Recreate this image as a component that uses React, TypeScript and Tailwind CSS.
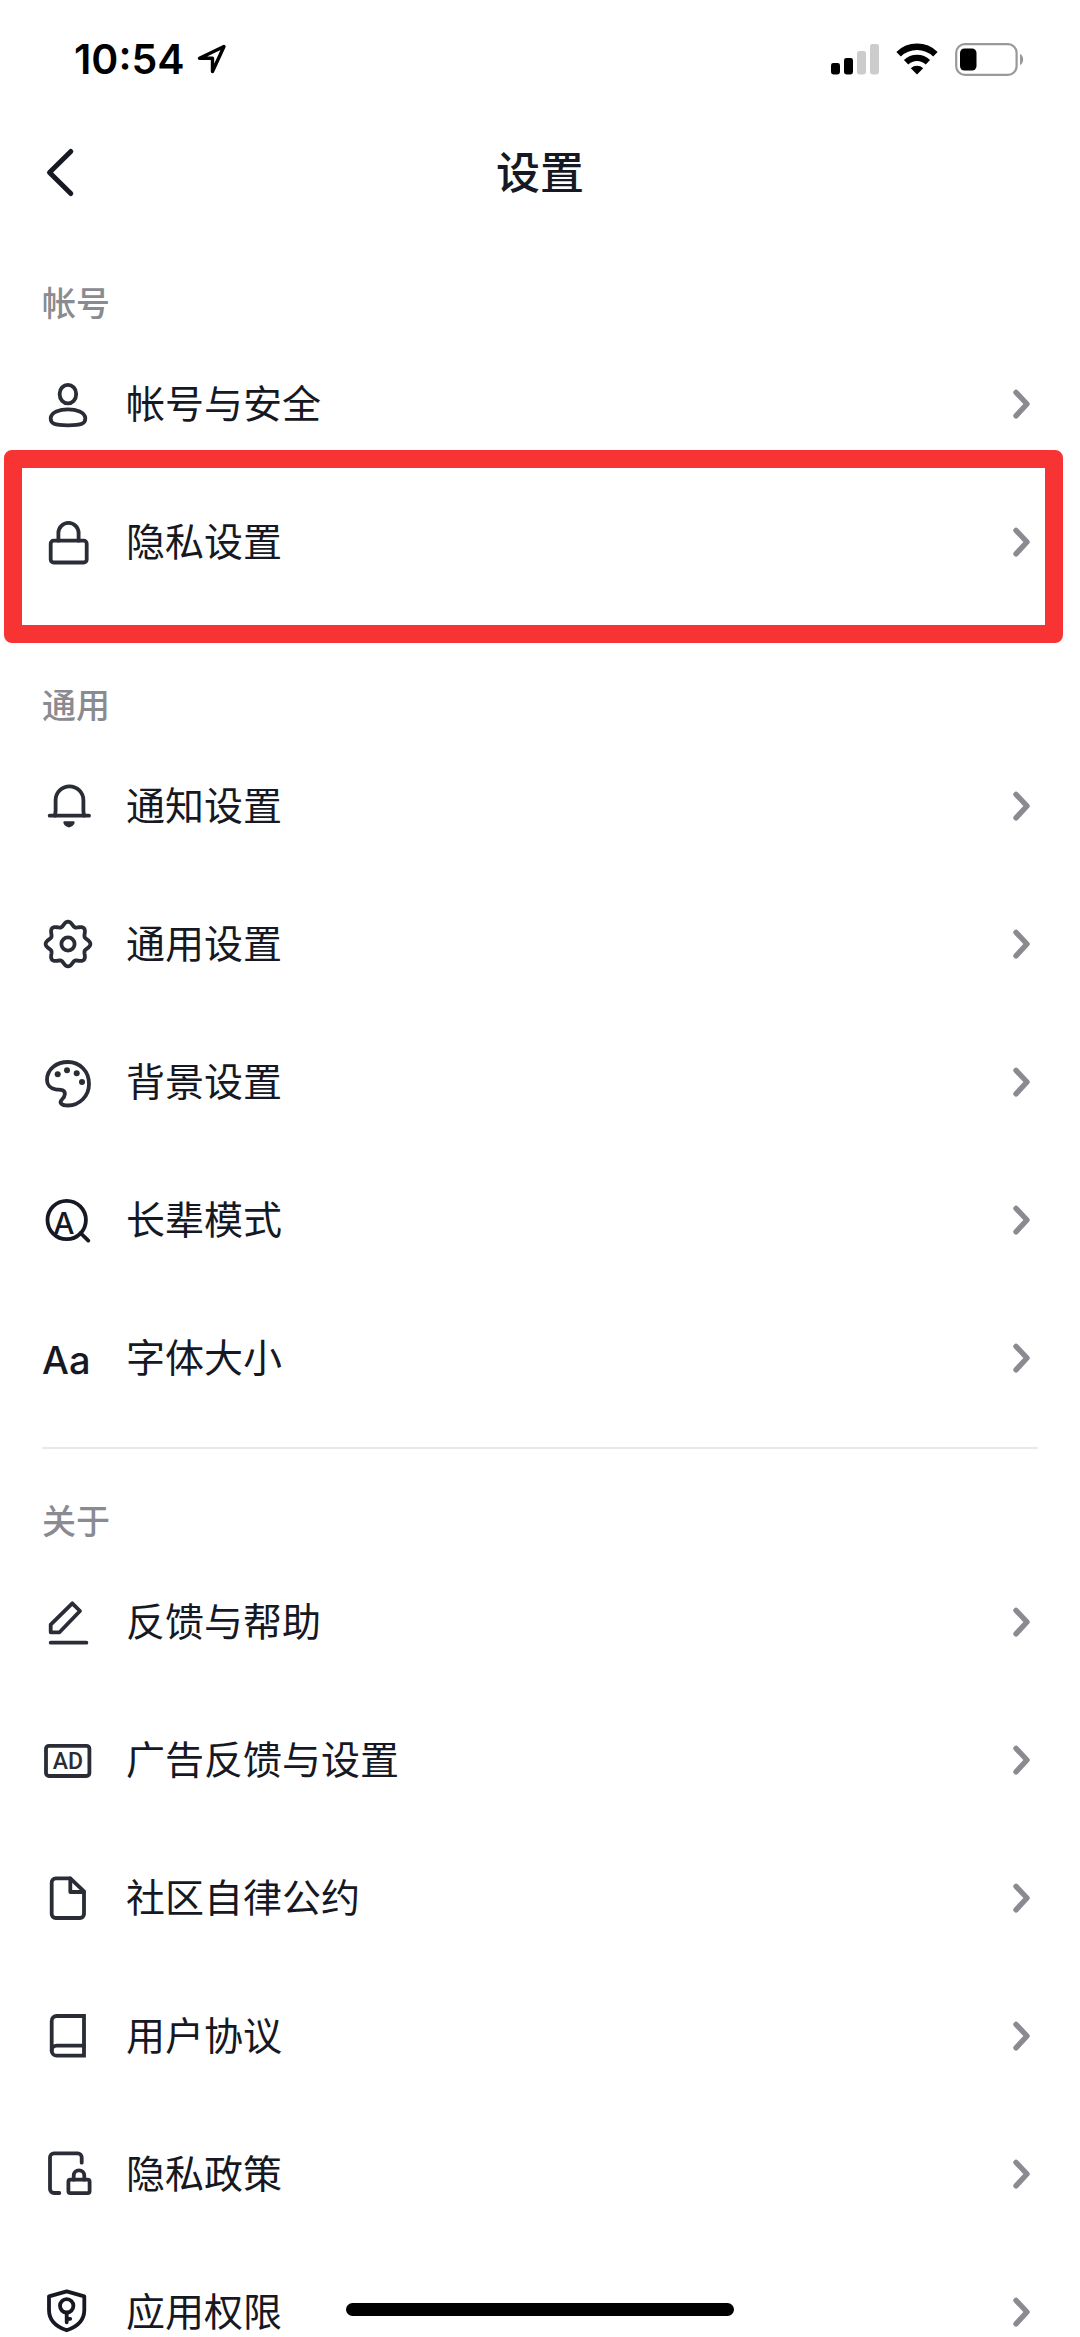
import React from 'react';

type SettingItem = {
    id: string;
    label: string;
    icon: React.ReactNode;
    dark?: boolean;
    highlighted?: boolean;
};

type SettingSection = {
    title: string;
    items: SettingItem[];
    spacing: string;
};

// Outline of the eight-lobed gear
const GEAR_POINTS = Array.from({ length: 120 }, (_, i) => {
    const angle = (i / 120) * Math.PI * 2;
    const radius = 20.2 + 2.2 * Math.cos(angle * 8);
    return `${(26 + radius * Math.cos(angle)).toFixed(2)},${(26 + radius * Math.sin(angle)).toFixed(2)}`;
}).join(' ');

const SECTIONS: SettingSection[] = [
    {
        title: '帐号',
        spacing: '',
        items: [
            {
                id: 'account',
                label: '帐号与安全',
                icon: (
                    <>
                        <rect x="17.7" y="6.8" width="16.4" height="18.6" rx="8.2" ry="8.6" />
                        <path d="M26 31.4C34 31.4 43.3 34 43.3 40.5C43.3 45.5 40 47.3 26 47.3C12 47.3 8.7 45.5 8.7 40.5C8.7 34 18 31.4 26 31.4Z" />
                    </>
                ),
            },
            {
                id: 'privacy',
                label: '隐私设置',
                highlighted: true,
                icon: (
                    <>
                        <rect x="8.7" y="24.7" width="36" height="21.8" rx="3" />
                        <path d="M16.4 24.7V17A10.1 10.1 0 0 1 36.6 17V24.7" />
                    </>
                ),
            },
        ],
    },
    {
        title: '通用',
        spacing: 'mt-[62px]',
        items: [
            {
                id: 'notification',
                label: '通知设置',
                icon: (
                    <>
                        <path d="M7.7 35.7H47" />
                        <path d="M13 35.7L13.6 31V20.2A13.9 13.9 0 0 1 41.4 20.2V31L42 35.7" />
                        <path d="M22.5 41.3H31.5C33 41.3 33 43 31.8 44.6C29 48.3 25 48.3 22.2 44.6C21 43 21 41.3 22.5 41.3Z" fill="currentColor" stroke="none" />
                    </>
                ),
            },
            {
                id: 'general',
                label: '通用设置',
                icon: (
                    <>
                        <polygon points={GEAR_POINTS} />
                        <circle cx="26" cy="26" r="6.6" />
                    </>
                ),
            },
            {
                id: 'background',
                label: '背景设置',
                icon: (
                    <>
                        <path d="M26 6C38 6 47 15.5 47 28C47 40 37.5 49.5 26 49.5C19 49.5 17 46.5 20 43.5C23.5 40 24 36 20.5 34.3C18 33.3 17 33.8 13.5 33.3C8.5 32.5 5 29 5 24C5 12.5 15 6 26 6Z" />
                        <g fill="currentColor" stroke="none">
                            <circle cx="15.7" cy="18.3" r="3" />
                            <circle cx="25" cy="14.3" r="3" />
                            <circle cx="34.7" cy="17.3" r="3" />
                            <circle cx="40" cy="26" r="3" />
                        </g>
                    </>
                ),
            },
            {
                id: 'elder',
                label: '长辈模式',
                dark: true,
                icon: (
                    <>
                        <circle cx="24.7" cy="26" r="19.2" />
                        <path d="M38.5 39L46.3 46.6" />
                        <text x="22" y="40" textAnchor="middle" fontSize="30" className="font-medium" fill="currentColor" stroke="none">A</text>
                    </>
                ),
            },
            {
                id: 'font-size',
                label: '字体大小',
                dark: true,
                icon: <text x="0" y="42" fontSize="38" className="font-medium" fill="currentColor" stroke="none">Aa</text>,
            },
        ],
    },
    {
        title: '关于',
        spacing: 'mt-10',
        items: [
            {
                id: 'feedback',
                label: '反馈与帮助',
                icon: (
                    <>
                        <path d="M30.3 7.3L38 15L17.5 36.3H8.7V28.6Z" />
                        <path d="M8.7 46.7H44.4" />
                    </>
                ),
            },
            {
                id: 'ads',
                label: '广告反馈与设置',
                icon: (
                    <>
                        <rect x="4" y="11.8" width="43.4" height="30.2" rx="3" />
                        <text x="26" y="35" textAnchor="middle" fontSize="23" className="font-['Roboto'] font-medium" fill="currentColor" stroke="none">AD</text>
                    </>
                ),
            },
            {
                id: 'community',
                label: '社区自律公约',
                icon: (
                    <>
                        <path d="M28.3 6.4H13.7A4 4 0 0 0 9.7 10.4V42A4 4 0 0 0 13.7 46H38A4 4 0 0 0 42 42V19.4Z" />
                        <path d="M28.3 6.4V20H42" />
                    </>
                ),
            },
            {
                id: 'agreement',
                label: '用户协议',
                icon: (
                    <>
                        <path d="M42 6H14.7A5 5 0 0 0 9.7 11V40.7A5 5 0 0 0 14.7 45.7H42Z" strokeLinejoin="miter" />
                        <path d="M9.7 40.7A5 5 0 0 1 14.7 35.7H42" />
                    </>
                ),
            },
            {
                id: 'policy',
                label: '隐私政策',
                icon: (
                    <>
                        <path d="M39.7 14.7V9.3A4 4 0 0 0 35.7 5.3H12A4 4 0 0 0 8 9.3V41A4 4 0 0 0 12 45H17.3" />
                        <rect x="26.4" y="31.7" width="21.2" height="13.4" rx="2" />
                        <path d="M31.7 31.7V27.7A5.3 5.3 0 0 1 42.3 27.7V31.7" />
                    </>
                ),
            },
            {
                id: 'permission',
                label: '应用权限',
                dark: true,
                icon: (
                    <>
                        <path d="M24.7 5.3L42.3 10.3V24C42.3 33.5 36 40.5 24.7 44.3C13.3 40.5 7 33.5 7 24V10.3Z" />
                        <circle cx="24.7" cy="19.8" r="6.7" />
                        <path d="M24.7 27V36.3M24.7 32.8H28.2" />
                    </>
                ),
            },
        ],
    },
];

function StatusBar() {
    return (
        <div className="h-[118px] flex-shrink-0 flex items-center justify-between pl-[74px] pr-14 text-black">
            <div className="flex items-center gap-3">
                <span className="text-[41px] leading-none font-semibold">10:54</span>
                <svg className="w-[30px] h-[30px]" viewBox="0 0 30 30" fill="none" stroke="currentColor" strokeWidth="3.4" strokeLinejoin="round">
                    <path d="M27 2.5L2.5 14.3H15.5V27.5Z" />
                </svg>
            </div>

            <div className="flex items-center">
                {/* Signal */}
                <svg className="w-12 h-8" viewBox="0 0 48 32" fill="currentColor">
                    <rect x="0" y="20" width="9" height="11.5" rx="2.4" />
                    <rect x="13" y="15" width="9" height="16.5" rx="2.4" />
                    <rect x="26" y="8" width="9" height="23.5" rx="2.4" fill="#cccccc" />
                    <rect x="39" y="1" width="9" height="30.5" rx="2.4" fill="#cccccc" />
                </svg>
                {/* Wifi */}
                <svg className="w-[42px] h-8 ml-[17px]" viewBox="0 0 42 32" fill="none" stroke="currentColor">
                    <path d="M2.6 11.2A26.5 26.5 0 0 1 39.4 11.2" strokeWidth="6.4" />
                    <path d="M10.1 19.3A15.6 15.6 0 0 1 31.9 19.3" strokeWidth="6.2" />
                    <path d="M21 31.5L14.8 25.2A9 9 0 0 1 27.2 25.2Z" fill="currentColor" stroke="none" />
                </svg>
                {/* Battery */}
                <svg className="w-[69px] h-[33px] ml-[17px]" viewBox="0 0 69 33" fill="none">
                    <rect x="1.2" y="1.2" width="60.4" height="30.6" rx="8.5" stroke="#999999" strokeWidth="2.2" />
                    <rect x="5" y="5.5" width="16.5" height="22" rx="4.5" fill="#000000" />
                    <path d="M65 11C69.2 12.5 69.2 20.5 65 22Z" fill="#999999" />
                </svg>
            </div>
        </div>
    );
}

function SettingRow({ item }: { item: SettingItem }) {
    return (
        <li className="relative">
            <a href={`#${item.id}`} className="h-[138px] px-[42px] flex items-center gap-8">
                <svg
                    className={`w-[52px] h-[52px] flex-shrink-0 ${item.dark ? 'text-[#161823]' : 'text-[#2b2d36]'}`}
                    viewBox="0 0 52 52"
                    fill="none"
                    stroke="currentColor"
                    strokeWidth="3.8"
                    strokeLinecap="round"
                    strokeLinejoin="round"
                    aria-hidden="true"
                >
                    {item.icon}
                </svg>
                <span className="flex-1 min-w-0 text-[39px] leading-[56px] text-[#161823]">{item.label}</span>
                <svg className="w-[34px] h-[34px] flex-shrink-0 text-[#8a8b91]" viewBox="0 0 34 34" fill="none" stroke="currentColor" strokeWidth="5.4" strokeLinecap="round" strokeLinejoin="round" aria-hidden="true">
                    <path d="M12 5.4L23 17L12 28.8" />
                </svg>
            </a>
            {item.highlighted && (
                <div className="absolute left-1 right-[17px] -top-[23px] -bottom-8 border-[18px] border-[#f83333] rounded-lg pointer-events-none" />
            )}
        </li>
    );
}

export default function App() {
    return (
        <div className="relative h-screen flex flex-col overflow-hidden bg-white font-['Inter','Noto_Sans_CJK_SC',sans-serif]">
            <StatusBar />

            {/* Header */}
            <header className="h-[110px] flex-shrink-0 grid grid-cols-[1fr_auto_1fr] items-center px-[42px]">
                <button type="button" aria-label="返回" className="w-9 h-[52px] text-[#161823]">
                    <svg className="w-9 h-[52px]" viewBox="0 0 36 52" fill="none" stroke="currentColor" strokeWidth="5" strokeLinecap="round" strokeLinejoin="round">
                        <path d="M28.8 4.5L7.5 25.5L28.8 46.5" />
                    </svg>
                </button>
                <h1 className="text-[44px] leading-[64px] font-medium text-[#161823]">设置</h1>
            </header>

            {/* Settings list */}
            <main className="flex-1 min-h-0 overflow-y-auto [scrollbar-width:none] pt-[43px]">
                {SECTIONS.map((section, index) => (
                    <section key={section.title}>
                        {index === 2 && <hr className="mx-[42px] mt-5 border-t-2 border-[#e8e8e9]" />}
                        <h2 className={`h-16 px-[42px] flex items-center text-[34px] font-medium text-[#8a8b91] ${section.spacing}`}>
                            {section.title}
                        </h2>
                        <ul>
                            {section.items.map((item) => (
                                <SettingRow key={item.id} item={item} />
                            ))}
                        </ul>
                    </section>
                ))}
            </main>

            {/* Home indicator */}
            <div className="absolute bottom-[21px] inset-x-0 flex justify-center pointer-events-none">
                <div className="w-[388px] h-[13px] rounded-full bg-black" />
            </div>
        </div>
    );
}
